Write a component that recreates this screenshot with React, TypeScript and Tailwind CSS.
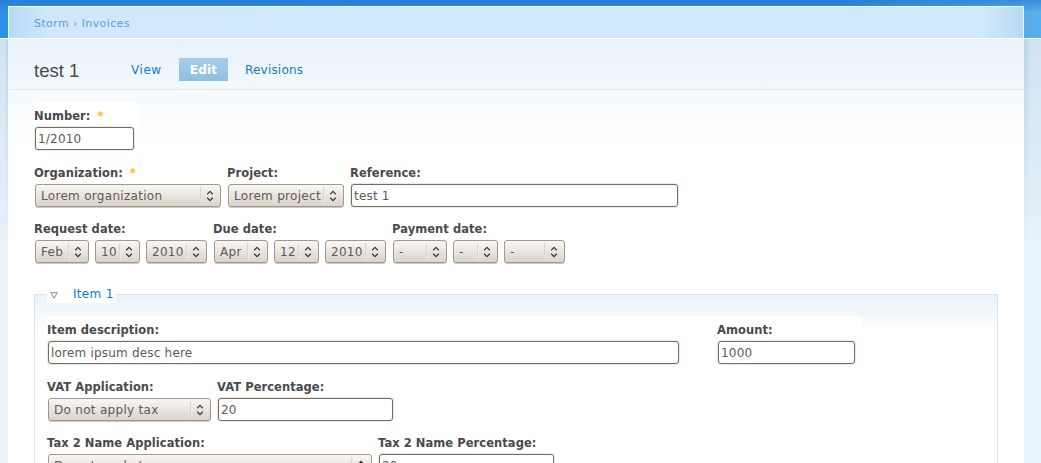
import React from "react";

const font = { fontFamily: '"DejaVu Sans", Verdana, sans-serif' };

function Updown() {
  return (
    <svg width="8" height="12" viewBox="0 0 8 12" className="shrink-0" fill="none" stroke="#3f3b37" strokeWidth="1.3">
      <path d="M1.2 4.2 L4 1.4 L6.8 4.2" />
      <path d="M1.2 7.8 L4 10.6 L6.8 7.8" />
    </svg>
  );
}

function Sel({ w, text }: { w: string; text: string }) {
  return (
    <div className={`${w} ml-px h-[23px] shrink-0 flex items-stretch rounded-[3px] border border-[#a3988c] bg-gradient-to-b from-[#f9f7f5] to-[#d9d3cc] shadow-[0_1px_0_#cfc8c0] text-[12px] text-[#5f5a55] tracking-[0.3px]`}>
      <span className="flex-1 min-w-0 pl-[5px] leading-[22px] whitespace-nowrap overflow-hidden">{text}</span>
      <span className="my-[2px] w-[2px] bg-gradient-to-r from-[#cfc9c2] to-[#f8f6f4]" />
      <span className="w-[18px] flex items-center pl-[4px]">
        <Updown />
      </span>
    </div>
  );
}

function Inp({ w, value }: { w: string; value: string }) {
  return (
    <input
      readOnly
      defaultValue={value}
      className={`${w} ml-px block h-[23px] shrink-0 rounded-[3px] border border-[#756b5e] bg-white pl-[2px] text-[12px] text-[#5a5a5a] tracking-[0.2px] outline-none shadow-[0_0_0_1px_#efe9e3]`}
    />
  );
}

function Lbl({ children, star }: { children: React.ReactNode; star?: boolean }) {
  return (
    <div className="h-[18px] text-[11.5px] leading-[15px] font-bold text-[#4a4a4a] tracking-[0.05px] whitespace-nowrap">
      {children}
      {star && <span className="ml-[7px] text-[#fdb813]">*</span>}
    </div>
  );
}

export default function App() {
  return (
    <div className="w-[1041px] h-[463px] overflow-hidden flex flex-col bg-white" style={font}>
      <div className="h-[38px] shrink-0 pt-[6px] pl-[8px] pr-[17px] bg-[linear-gradient(180deg,rgba(35,110,200,0.55)_0px,rgba(35,110,200,0)_12px),linear-gradient(90deg,#2f8fe6_0%,#338ce0_80%,#57b0ea_100%)]">
        <div className="h-[32px] border border-b-0 border-[#f4fafe] bg-[linear-gradient(90deg,#b5daf5_0px,#d0e8f9_40px,#d0e8f9_974px,#b5daf5_100%)] pl-[25px] pt-[10px] text-[11px] leading-[14px] tracking-[0.4px] text-[#5c9fd8]">
          Storm › Invoices
        </div>
      </div>
      <div className="h-px shrink-0 bg-white" />
      <div className="flex flex-1 min-h-0">
        <div className="w-[8px] shrink-0 bg-[linear-gradient(180deg,rgba(233,243,251,0)_0px,#e9f3fb_220px),linear-gradient(90deg,#cfe3f1_60%,#b3d2e8)]" />
        <div className="flex-1 min-w-0 bg-white">
          <div className="h-[51px] flex border-b border-[#e6eef3] bg-gradient-to-b from-[#e9f2fb] to-[#f2f8fb] pl-[26px]">
            <div className="w-[97px] pt-[21px] text-[18.5px] leading-[22px] text-[#4a4a4a]" style={{ fontFamily: '"Liberation Sans", Arial, sans-serif' }}>
              test 1
            </div>
            <div className="flex items-start pt-[19px] text-[12px] leading-[24px] text-[#0f7cc4]">
              <span className="w-[48px] tracking-[0.55px]">View</span>
              <span className="w-[49px] h-[23px] text-center font-bold text-white tracking-[0.2px] bg-gradient-to-b from-[#a6cde8] to-[#8fbfe0]">Edit</span>
              <span className="ml-[17px] tracking-[0.2px]">Revisions</span>
            </div>
          </div>
          <div className="pl-[26px] pr-[26px] pt-[12px] h-[374px] bg-[linear-gradient(180deg,#f6fafd_0px,#ffffff_60px)]">
            <div className="w-[105px] h-[48px] bg-white pt-[7px]">
              <Lbl star>Number:</Lbl>
              <Inp w="w-[99px]" value="1/2010" />
            </div>
            <div className="mt-[16px] flex gap-[6px]">
              <div><Lbl star>Organization:</Lbl><Sel w="w-[186px]" text="Lorem organization" /></div>
              <div><Lbl>Project:</Lbl><Sel w="w-[116px]" text="Lorem project" /></div>
              <div><Lbl>Reference:</Lbl><Inp w="w-[327px]" value="test 1" /></div>
            </div>
            <div className="mt-[15px] flex gap-[6px]">
              <div>
                <Lbl>Request date:</Lbl>
                <div className="flex gap-[5px]">
                  <Sel w="w-[54px]" text="Feb" />
                  <Sel w="w-[45px]" text="10" />
                  <Sel w="w-[61px]" text="2010" />
                </div>
              </div>
              <div>
                <Lbl>Due date:</Lbl>
                <div className="flex gap-[5px]">
                  <Sel w="w-[54px]" text="Apr" />
                  <Sel w="w-[45px]" text="12" />
                  <Sel w="w-[61px]" text="2010" />
                </div>
              </div>
              <div>
                <Lbl>Payment date:</Lbl>
                <div className="flex gap-[5px]">
                  <Sel w="w-[54px]" text="-" />
                  <Sel w="w-[45px]" text="-" />
                  <Sel w="w-[61px]" text="-" />
                </div>
              </div>
            </div>
            <fieldset className="mt-[22px] w-[964px] h-[300px] border border-[#d6e7f4] bg-[linear-gradient(180deg,#e9f2fb_0px,#ffffff_38px)] pl-[12px]">
              <legend className="flex items-center h-[18px] text-[12px] text-[#0f7cc4] tracking-[0.3px] bg-white pl-[3px] pr-[2px]">
                <svg width="8" height="7" viewBox="0 0 8 7" className="mr-[15px] mt-[2px]" fill="#fff" stroke="#8d8d8d">
                  <path d="M0.7 0.7 H7.3 L4 6.3 Z" />
                </svg>
                Item 1
              </legend>
              <div className="mt-[13px] w-[815px] h-[48px] bg-white pt-[7px]">
                <div className="flex gap-[38px]">
                  <div><Lbl>Item description:</Lbl><Inp w="w-[631px]" value="lorem ipsum desc here" /></div>
                  <div><Lbl>Amount:</Lbl><Inp w="w-[137px]" value="1000" /></div>
                </div>
              </div>
              <div className="mt-[16px] flex gap-[6px]">
                <div><Lbl>VAT Application:</Lbl><Sel w="w-[163px]" text="Do not apply tax" /></div>
                <div><Lbl>VAT Percentage:</Lbl><Inp w="w-[175px]" value="20" /></div>
              </div>
              <div className="mt-[15px] flex gap-[6px]">
                <div><Lbl>Tax 2 Name Application:</Lbl><Sel w="w-[324px]" text="Do not apply tax" /></div>
                <div><Lbl>Tax 2 Name Percentage:</Lbl><Inp w="w-[175px]" value="20" /></div>
              </div>
            </fieldset>
          </div>
        </div>
        <div className="w-[17px] shrink-0 bg-[linear-gradient(180deg,rgba(233,243,251,0)_0px,#e9f3fb_220px),linear-gradient(90deg,#b3d2e8,#cfe3f1_40%)]" />
      </div>
    </div>
  );
}
